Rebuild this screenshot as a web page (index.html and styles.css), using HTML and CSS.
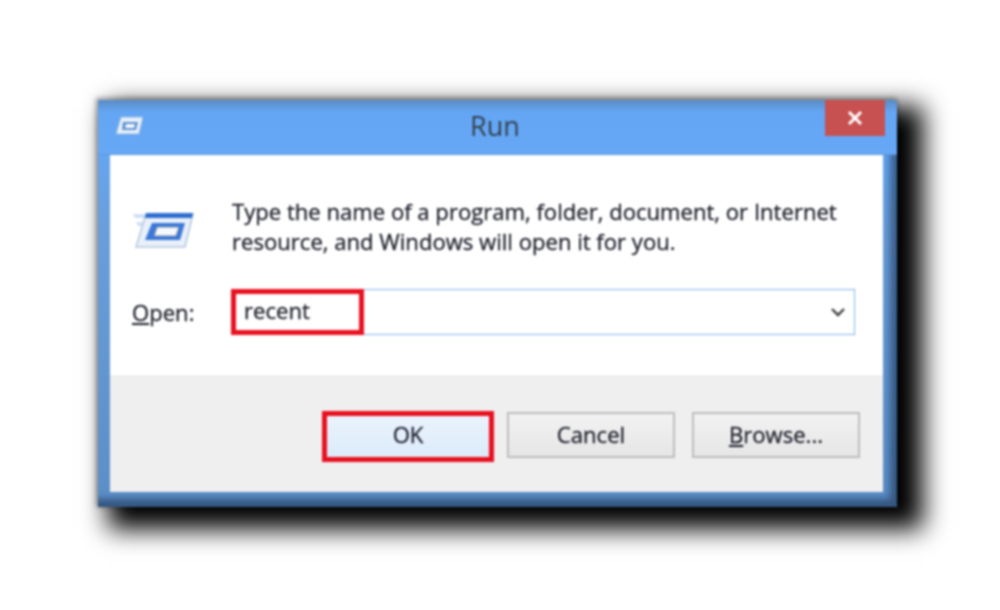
FILE: index.html
```html
<!DOCTYPE html>
<html lang="en">
<head>
  <meta charset="UTF-8" />
  <title>Run</title>
  <link rel="stylesheet" href="styles.css">
</head>
<body>

  <!-- Run dialog -->
  <div class="run-window">
    <header class="title-bar">
      <svg class="title-icon" viewBox="0 0 28 20" width="28" height="20">
        <path d="M6 1 H28 L24 18 H1 Z" fill="#e8f1fb" stroke="#8fb6e0" />
        <path d="M8 6 H23 L21 14 H7 Z" fill="#5b8fd0" />
        <path d="M11 8 H20 L19 12 H10 Z" fill="#f4f8fd" />
      </svg>
      <span class="title-text">Run</span>
      <button class="close-btn">
        <svg viewBox="0 0 16 16" width="16" height="16">
          <path d="M2 2 L14 14 M14 2 L2 14" stroke="#fff" stroke-width="3" />
        </svg>
      </button>
    </header>

    <div class="run-body">
      <div class="intro">
        <svg class="run-icon" viewBox="0 0 62 40" width="62" height="40">
          <path d="M1 4 H14 L12 8 H3 Z M4 12 H12 L10 16 H6 Z" fill="#cfe0f5" />
          <path d="M14 4 H61 L53 37 H4 Z" fill="#e9f0f9" stroke="#b4c8de" stroke-width="1.5" />
          <path d="M14 3 H61 L60 8 H13 Z" fill="#2f6fd0" />
          <path d="M20 13 H53 L48 30 H13 Z" fill="#3b78d8" />
          <path d="M25 17 H47 L44 26 H22 Z" fill="#f6f9fd" stroke="#7c8ea3" />
        </svg>
        <p class="intro-text">Type the name of a program, folder, document, or Internet resource, and Windows will open it for you.</p>
      </div>

      <div class="open-row">
        <label class="open-label"><u>O</u>pen:</label>
        <div class="open-input">
          <span class="highlight-box">recent</span>
          <svg class="chevron" viewBox="0 0 16 10" width="16" height="10">
            <path d="M2 2 L8 8 L14 2" fill="none" stroke="#3c3c3c" stroke-width="2.4" />
          </svg>
        </div>
      </div>
    </div>

    <div class="run-footer">
      <button class="btn btn-ok">OK</button>
      <button class="btn btn-cancel">Cancel</button>
      <button class="btn"><u>B</u>rowse...</button>
    </div>
  </div>

</body>
</html>
```

FILE: styles.css
```css
html {
  background: #fff;
}

body {
  margin: 0;
  height: 610px;
  box-sizing: border-box;
  padding: 100px 0 0 98px;
  overflow: hidden;
  font-family: 'Open Sans', 'Noto Sans', sans-serif;
  color: #1c1e2a;
  -webkit-text-stroke: 0.3px #1c1e2a;
}

.run-window {
  position: relative;
  width: 799px;
  height: 407px;
  box-sizing: border-box;
  display: flex;
  flex-direction: column;
  padding: 0 14px 15px 12px;
  background: linear-gradient(#5f9ae6 0%, #64a6f2 12%, #6a9fdc 30%, #5c8ec6 100%);
  box-shadow: inset -7px -8px 7px rgba(20, 40, 70, 0.55), 18px 14px 24px 8px #000, -1px -1px 5px 1px #aaa;
  filter: blur(0.8px);
}

.title-bar {
  position: relative;
  flex: 0 0 55px;
  margin: 0 -14px 0 -12px;
  display: flex;
  align-items: center;
  justify-content: center;
  background: linear-gradient(#5a8cc4 0, #64a6f4 12px, #66a8f5 100%);
  border-bottom: 1px solid #5f97dc;
  box-sizing: border-box;
}

.title-icon {
  position: absolute;
  left: 17px;
  top: 16px;
}

.title-text {
  font-size: 27px;
  color: #33414f;
  -webkit-text-stroke: 0;
  margin-left: -5px;
  margin-bottom: 4px;
}

.close-btn {
  position: absolute;
  top: 0;
  right: 12px;
  width: 60px;
  height: 36px;
  padding: 0;
  border: none;
  background: #c75050;
  display: flex;
  align-items: center;
  justify-content: center;
}

.run-body {
  flex: 0 0 220px;
  box-sizing: border-box;
  padding: 41px 28px 0 22px;
  background: #fff;
}

.intro {
  display: flex;
  align-items: flex-start;
}

.run-icon {
  flex-shrink: 0;
  margin: 14px 38px 0 0;
}

.intro-text {
  margin: 0;
  width: 630px;
  font-size: 22.1px;
  line-height: 30px;
}

.open-row {
  display: flex;
  align-items: center;
  margin-top: 33px;
}

.open-label {
  width: 99px;
  font-size: 22.1px;
}

.open-input {
  flex: 1;
  height: 46px;
  display: flex;
  align-items: center;
  justify-content: space-between;
  box-sizing: border-box;
  border: 1px solid #7eb4ea;
  border-left: none;
  padding-right: 8px;
}

.highlight-box {
  width: 133px;
  height: 46px;
  box-sizing: border-box;
  padding-left: 8px;
  border: 5px solid #e8101f;
  font-size: 22.1px;
  line-height: 32px;
}

.run-footer {
  flex: 1;
  display: flex;
  justify-content: flex-end;
  align-items: flex-start;
  gap: 17px;
  padding: 37px 23px 0 0;
  background: #efefef;
}

.btn {
  width: 168px;
  height: 46px;
  padding: 0 0 3px;
  border: 2px solid #bdbdbd;
  background: linear-gradient(#f2f2f2, #e6e6e6);
  font-family: inherit;
  font-size: 22.1px;
  color: #1c1e2a;
  -webkit-text-stroke: 0.3px #1c1e2a;
}

.btn-ok {
  width: 172px;
  height: 51px;
  margin: -1px -4px 0 -1px;
  padding-bottom: 6px;
  border: 5px solid #e8101f;
  background: linear-gradient(#eaf3fc, #dcebfb);
}
```
